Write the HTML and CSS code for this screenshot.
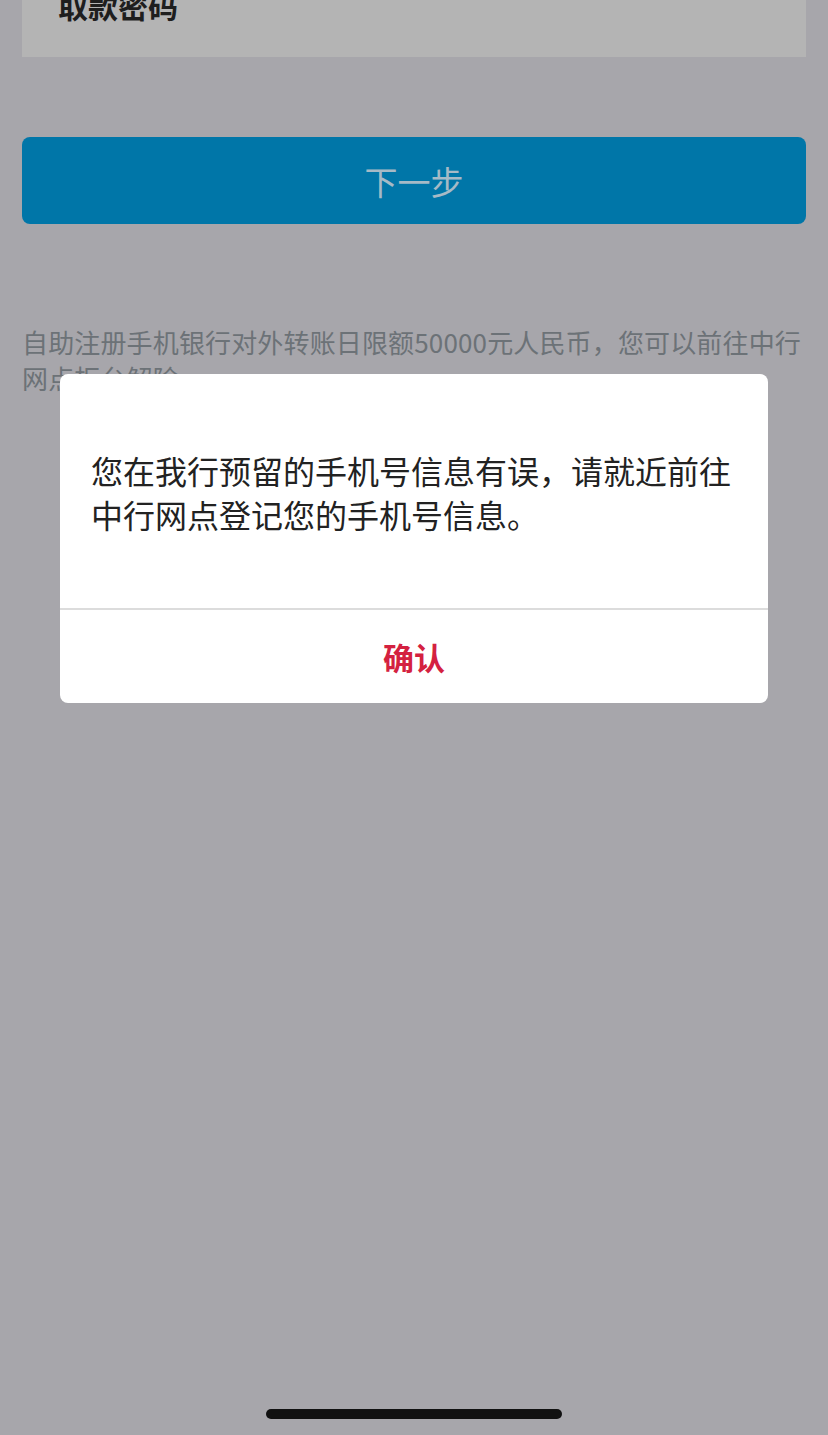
FILE: index.html
```html
<!DOCTYPE html>
<html lang="zh-CN">
<head>
<meta charset="utf-8">
<title>手机银行注册</title>
<link rel="stylesheet" href="styles.css">
</head>
<body>
<div class="page">
  <div class="field">
    <span class="field-label">取款密码</span>
  </div>
  <div class="next-btn">下一步</div>
  <p class="note">自助注册手机银行对外转账日限额50000元人民币，您可以前往中行网点柜台解除。</p>
</div>

<div class="dialog">
  <div class="dialog-body">
    <p class="dialog-msg">您在我行预留的手机号信息有误，请就近前往中行网点登记您的手机号信息。</p>
  </div>
  <div class="dialog-action">确认</div>
</div>

<div class="home-indicator"></div>
</body>
</html>
```

FILE: styles.css
```css
html, body {
  margin: 0;
  padding: 0;
}
body {
  background: #a7a6ab;
  font-family: "Noto Sans CJK SC", "Noto Sans", sans-serif;
  width: 828px;
  height: 1435px;
  overflow: hidden;
}
.page {
  margin-top: -20px;
  padding: 0 22px;
  display: flex;
  flex-direction: column;
}
.field {
  height: 77px;
  background: #b4b4b4;
  box-sizing: border-box;
  padding: 10px 0 0 36px;
}
.field-label {
  display: block;
  font-size: 30px;
  line-height: 30px;
  font-weight: 700;
  color: #1e1e1e;
}
.next-btn {
  margin-top: 80px;
  height: 87px;
  border-radius: 8px;
  background: #0076a8;
  color: #a6bac6;
  font-size: 33px;
  display: flex;
  align-items: center;
  justify-content: center;
}
.note {
  margin: 100px 0 0 0;
  font-size: 26px;
  line-height: 36px;
  letter-spacing: 0.15px;
  color: #6c7277;
}
.dialog {
  position: absolute;
  top: 374px;
  left: 60px;
  width: 708px;
  background: #ffffff;
  border-radius: 8px;
  overflow: hidden;
}
.dialog-body {
  height: 236px;
  box-sizing: border-box;
  padding: 2px 31px 0;
  display: flex;
  align-items: center;
  border-bottom: 2px solid #dcdcdc;
}
.dialog-msg {
  margin: 0;
  font-size: 32px;
  line-height: 44px;
  color: #222222;
}
.dialog-action {
  height: 93px;
  display: flex;
  align-items: center;
  justify-content: center;
  font-size: 31px;
  font-weight: 700;
  color: #d42140;
}
.home-indicator {
  position: absolute;
  left: 266px;
  top: 1409px;
  width: 296px;
  height: 10px;
  border-radius: 5px;
  background: #111111;
}
```
